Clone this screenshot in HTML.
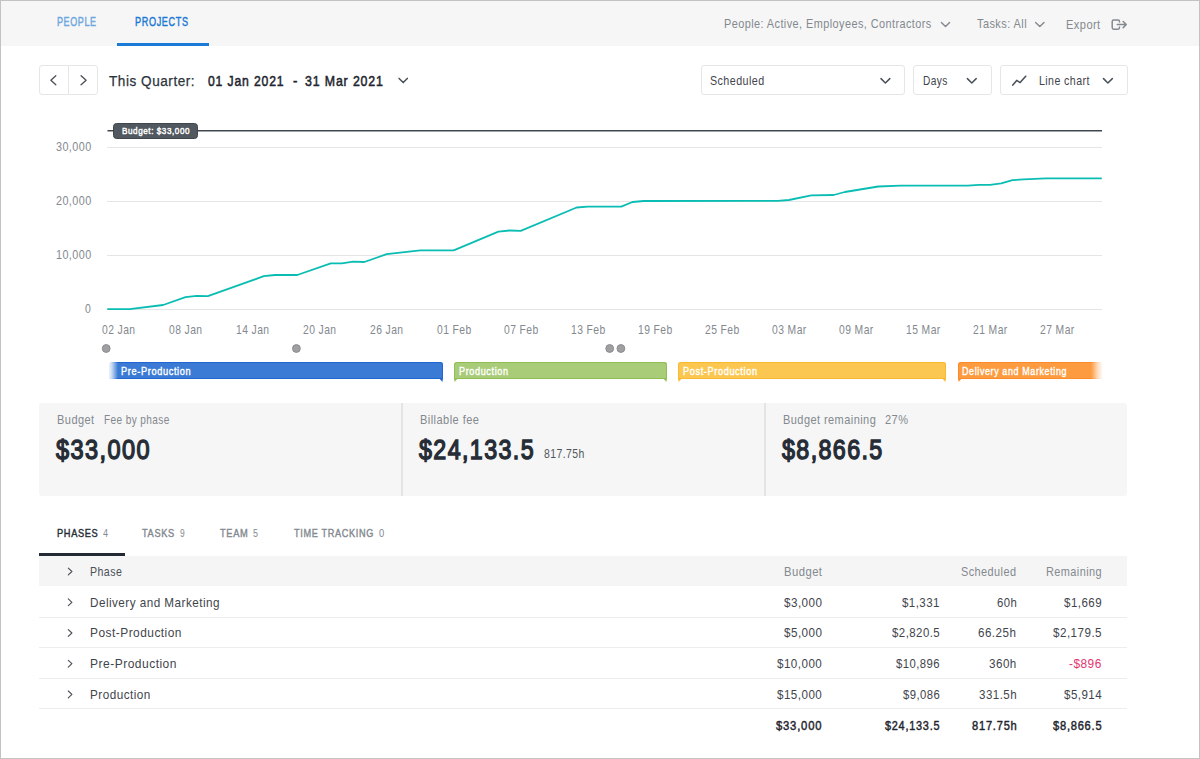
<!DOCTYPE html>
<html><head><meta charset="utf-8"><style>
html,body{margin:0;padding:0;}
body{width:1200px;height:759px;position:relative;overflow:hidden;background:#fff;font-family:"Liberation Sans",sans-serif;}
.t{position:absolute;white-space:nowrap;transform-origin:0 0;}
.r{position:absolute;}
.frame{position:absolute;left:0;top:0;width:1200px;height:759px;box-sizing:border-box;border:1px solid #c3c3c3;pointer-events:none;}
</style></head><body>
<div class="r" style="left:0px;top:0px;width:1200px;height:46px;background:#f6f6f6;"></div>
<div class="r" style="left:117px;top:43px;width:92px;height:3px;background:#1a7bd6;"></div>
<div class="t" style="left:56.70px;top:15.83px;font-size:12px;line-height:12px;font-weight:normal;color:#6ea7df;letter-spacing:0.8400000000000001px;transform:scaleX(0.7487);-webkit-text-stroke:0.43px #6ea7df;">PEOPLE</div>
<div class="t" style="left:134.70px;top:15.83px;font-size:12px;line-height:12px;font-weight:normal;color:#1c79d4;letter-spacing:0.8400000000000001px;transform:scaleX(0.7598);-webkit-text-stroke:0.43px #1c79d4;">PROJECTS</div>
<div class="t" style="left:724.40px;top:16.69px;font-size:13.5px;line-height:13.5px;font-weight:normal;color:#83898f;letter-spacing:0.54px;transform:scaleX(0.8063);">People: Active, Employees, Contractors</div>
<div class="t" style="left:976.70px;top:16.89px;font-size:13.5px;line-height:13.5px;font-weight:normal;color:#83898f;letter-spacing:0.54px;transform:scaleX(0.8114);">Tasks: All</div>
<div class="t" style="left:1065.50px;top:17.99px;font-size:13.5px;line-height:13.5px;font-weight:normal;color:#83898f;letter-spacing:0.54px;transform:scaleX(0.8198);">Export</div>
<div class="r" style="left:39px;top:65px;width:59px;height:30px;border:1px solid #e5e6e8;border-radius:3px;box-sizing:border-box;background:#fff;"></div>
<div class="r" style="left:68px;top:65px;width:1px;height:30px;background:#e5e6e8;"></div>
<div class="t" style="left:109.30px;top:72.98px;font-size:15.2px;line-height:15.2px;font-weight:normal;color:#2c333b;letter-spacing:0.608px;transform:scaleX(0.8928);-webkit-text-stroke:0.25px #2c333b;">This Quarter:</div>
<div class="t" style="left:207.70px;top:72.98px;font-size:15.2px;line-height:15.2px;font-weight:normal;color:#1f262f;letter-spacing:1.064px;transform:scaleX(0.8016);-webkit-text-stroke:0.55px #1f262f;">01 Jan 2021</div>
<div class="t" style="left:293.30px;top:72.98px;font-size:15.2px;line-height:15.2px;font-weight:normal;color:#1f262f;letter-spacing:1.064px;transform:scaleX(0.8693);-webkit-text-stroke:0.55px #1f262f;">-</div>
<div class="t" style="left:305.30px;top:72.98px;font-size:15.2px;line-height:15.2px;font-weight:normal;color:#1f262f;letter-spacing:1.064px;transform:scaleX(0.8126);-webkit-text-stroke:0.55px #1f262f;">31 Mar 2021</div>
<div class="r" style="left:701px;top:65px;width:204px;height:30px;border:1px solid #e5e6e8;border-radius:3px;box-sizing:border-box;"></div>
<div class="r" style="left:913px;top:65px;width:79px;height:30px;border:1px solid #e5e6e8;border-radius:3px;box-sizing:border-box;"></div>
<div class="r" style="left:1000px;top:65px;width:128px;height:30px;border:1px solid #e5e6e8;border-radius:3px;box-sizing:border-box;"></div>
<div class="t" style="left:710.20px;top:74.97px;font-size:12.8px;line-height:12.8px;font-weight:normal;color:#3f454c;letter-spacing:0.512px;transform:scaleX(0.8376);">Scheduled</div>
<div class="t" style="left:923.20px;top:74.97px;font-size:12.8px;line-height:12.8px;font-weight:normal;color:#3f454c;letter-spacing:0.512px;transform:scaleX(0.7917);">Days</div>
<div class="t" style="left:1038.60px;top:74.97px;font-size:12.8px;line-height:12.8px;font-weight:normal;color:#3f454c;letter-spacing:0.512px;transform:scaleX(0.8286);">Line chart</div>
<svg class="r" style="left:0;top:0" width="1200" height="759" viewBox="0 0 1200 759"><line x1="107" y1="147.5" x2="1102" y2="147.5" stroke="#e5e5e5" stroke-width="1"/><line x1="107" y1="201.5" x2="1102" y2="201.5" stroke="#e5e5e5" stroke-width="1"/><line x1="107" y1="255.5" x2="1102" y2="255.5" stroke="#e5e5e5" stroke-width="1"/><line x1="107" y1="309.5" x2="1102" y2="309.5" stroke="#e5e5e5" stroke-width="1"/><line x1="107.5" y1="130.7" x2="1102" y2="130.7" stroke="#40474e" stroke-width="1.6"/><polyline points="107.30,309.20 129.65,309.20 163.17,305.00 185.52,297.20 196.69,295.80 207.87,296.20 263.74,276.20 274.91,275.00 297.26,275.00 330.78,263.30 341.96,263.30 353.13,261.70 364.31,262.00 386.65,254.20 420.18,250.30 453.70,250.30 498.40,231.70 509.57,230.50 520.74,230.80 576.61,207.50 587.79,206.70 621.31,206.70 632.49,202.00 643.66,201.00 777.75,200.80 788.92,200.00 811.27,195.30 833.62,195.00 844.79,192.00 878.32,186.50 900.67,185.60 967.71,185.60 978.88,184.80 990.06,184.80 1001.23,183.30 1012.41,180.20 1023.58,179.40 1045.93,178.30 1101.80,178.30" fill="none" stroke="#0abdb3" stroke-width="1.8" stroke-linejoin="round"/><circle cx="106.20" cy="348.5" r="3.9" fill="#a0a0a0" stroke="#878c93" stroke-width="1"/><circle cx="296.40" cy="348.5" r="3.9" fill="#a0a0a0" stroke="#878c93" stroke-width="1"/><circle cx="609.70" cy="348.5" r="3.9" fill="#a0a0a0" stroke="#878c93" stroke-width="1"/><circle cx="620.90" cy="348.5" r="3.9" fill="#a0a0a0" stroke="#878c93" stroke-width="1"/></svg>
<div class="r" style="left:113px;top:123px;width:85px;height:15.5px;background:#51585f;border:1px solid #40464d;box-sizing:border-box;border-radius:3.5px;"></div>
<div class="t" style="left:121.90px;top:125.68px;font-size:9.9px;line-height:9.9px;font-weight:normal;color:#ffffff;letter-spacing:0.6930000000000001px;transform:scaleX(0.8219);-webkit-text-stroke:0.36px #ffffff;-webkit-text-stroke:0.45px #fff;">Budget: $33,000</div>
<div class="t" style="left:55.80px;top:140.67px;font-size:12.8px;line-height:12.8px;font-weight:normal;color:#83898f;letter-spacing:0.512px;transform:scaleX(0.8438);">30,000</div>
<div class="t" style="left:55.80px;top:194.67px;font-size:12.8px;line-height:12.8px;font-weight:normal;color:#83898f;letter-spacing:0.512px;transform:scaleX(0.8438);">20,000</div>
<div class="t" style="left:55.80px;top:248.67px;font-size:12.8px;line-height:12.8px;font-weight:normal;color:#83898f;letter-spacing:0.512px;transform:scaleX(0.8438);">10,000</div>
<div class="t" style="left:85.20px;top:302.67px;font-size:12.8px;line-height:12.8px;font-weight:normal;color:#83898f;letter-spacing:0.512px;transform:scaleX(0.8150);">0</div>
<div class="t" style="left:101.95px;top:324.17px;font-size:12.8px;line-height:12.8px;font-weight:normal;color:#83898f;letter-spacing:0.512px;transform:scaleX(0.8063);">02 Jan</div>
<div class="t" style="left:169.00px;top:324.17px;font-size:12.8px;line-height:12.8px;font-weight:normal;color:#83898f;letter-spacing:0.512px;transform:scaleX(0.8063);">08 Jan</div>
<div class="t" style="left:236.04px;top:324.17px;font-size:12.8px;line-height:12.8px;font-weight:normal;color:#83898f;letter-spacing:0.512px;transform:scaleX(0.8063);">14 Jan</div>
<div class="t" style="left:303.09px;top:324.17px;font-size:12.8px;line-height:12.8px;font-weight:normal;color:#83898f;letter-spacing:0.512px;transform:scaleX(0.8063);">20 Jan</div>
<div class="t" style="left:370.13px;top:324.17px;font-size:12.8px;line-height:12.8px;font-weight:normal;color:#83898f;letter-spacing:0.512px;transform:scaleX(0.8063);">26 Jan</div>
<div class="t" style="left:436.56px;top:324.17px;font-size:12.8px;line-height:12.8px;font-weight:normal;color:#83898f;letter-spacing:0.512px;transform:scaleX(0.8081);">01 Feb</div>
<div class="t" style="left:503.61px;top:324.17px;font-size:12.8px;line-height:12.8px;font-weight:normal;color:#83898f;letter-spacing:0.512px;transform:scaleX(0.8081);">07 Feb</div>
<div class="t" style="left:570.65px;top:324.17px;font-size:12.8px;line-height:12.8px;font-weight:normal;color:#83898f;letter-spacing:0.512px;transform:scaleX(0.8081);">13 Feb</div>
<div class="t" style="left:637.70px;top:324.17px;font-size:12.8px;line-height:12.8px;font-weight:normal;color:#83898f;letter-spacing:0.512px;transform:scaleX(0.8081);">19 Feb</div>
<div class="t" style="left:704.74px;top:324.17px;font-size:12.8px;line-height:12.8px;font-weight:normal;color:#83898f;letter-spacing:0.512px;transform:scaleX(0.8081);">25 Feb</div>
<div class="t" style="left:771.80px;top:324.17px;font-size:12.8px;line-height:12.8px;font-weight:normal;color:#83898f;letter-spacing:0.512px;transform:scaleX(0.8081);">03 Mar</div>
<div class="t" style="left:838.84px;top:324.17px;font-size:12.8px;line-height:12.8px;font-weight:normal;color:#83898f;letter-spacing:0.512px;transform:scaleX(0.8081);">09 Mar</div>
<div class="t" style="left:905.89px;top:324.17px;font-size:12.8px;line-height:12.8px;font-weight:normal;color:#83898f;letter-spacing:0.512px;transform:scaleX(0.8081);">15 Mar</div>
<div class="t" style="left:972.93px;top:324.17px;font-size:12.8px;line-height:12.8px;font-weight:normal;color:#83898f;letter-spacing:0.512px;transform:scaleX(0.8081);">21 Mar</div>
<div class="t" style="left:1039.97px;top:324.17px;font-size:12.8px;line-height:12.8px;font-weight:normal;color:#83898f;letter-spacing:0.512px;transform:scaleX(0.8081);">27 Mar</div>
<div class="r" style="left:0px;top:0px;width:0px;height:0px;"></div>
<div class="r" style="left:109px;top:362px;width:334px;height:17px;background:#3b7bd5;border:1px solid #1f66d1;border-bottom:none;border-radius:2.5px 2.5px 0 0;box-sizing:border-box;"></div>
<svg class="r" style="left:109px;top:378px" width="334" height="5" viewBox="0 0 334 5"><path d="M334 0 H330 L333.4 4 Z" fill="#1f66d1"/><rect x="0" y="0" width="334" height="1" fill="#1f66d1"/></svg>
<div class="r" style="left:454px;top:362px;width:213px;height:17px;background:#a9cc78;border:1px solid #8fbe55;border-bottom:none;border-radius:2.5px 2.5px 0 0;box-sizing:border-box;"></div>
<svg class="r" style="left:454px;top:378px" width="213" height="5" viewBox="0 0 213 5"><path d="M0 0 H4 L0.6 4 Z" fill="#8fbe55"/><path d="M213 0 H209 L212.4 4 Z" fill="#8fbe55"/><rect x="0" y="0" width="213" height="1" fill="#8fbe55"/></svg>
<div class="r" style="left:678px;top:362px;width:268px;height:17px;background:#fcc750;border:1px solid #f7ba2f;border-bottom:none;border-radius:2.5px 2.5px 0 0;box-sizing:border-box;"></div>
<svg class="r" style="left:678px;top:378px" width="268" height="5" viewBox="0 0 268 5"><path d="M0 0 H4 L0.6 4 Z" fill="#f7ba2f"/><path d="M268 0 H264 L267.4 4 Z" fill="#f7ba2f"/><rect x="0" y="0" width="268" height="1" fill="#f7ba2f"/></svg>
<div class="r" style="left:958px;top:362px;width:144px;height:17px;background:#fd9b40;border:1px solid #fa8b28;border-bottom:none;border-radius:2.5px 2.5px 0 0;box-sizing:border-box;"></div>
<svg class="r" style="left:958px;top:378px" width="144" height="5" viewBox="0 0 144 5"><path d="M0 0 H4 L0.6 4 Z" fill="#fa8b28"/><rect x="0" y="0" width="144" height="1" fill="#fa8b28"/></svg>
<div class="r" style="left:108px;top:361px;width:10px;height:22px;background:linear-gradient(90deg,#fff 0%,rgba(255,255,255,0.7) 40%,rgba(255,255,255,0) 100%);"></div>
<div class="r" style="left:1091px;top:361px;width:12px;height:22px;background:linear-gradient(90deg,rgba(255,255,255,0) 0%,rgba(255,255,255,0.7) 60%,#fff 100%);"></div>
<div class="t" style="left:120.70px;top:365.60px;font-size:10.6px;line-height:10.6px;font-weight:normal;color:#fff;letter-spacing:0.742px;transform:scaleX(0.8675);-webkit-text-stroke:0.38px #fff;">Pre-Production</div>
<div class="t" style="left:459.00px;top:365.60px;font-size:10.6px;line-height:10.6px;font-weight:normal;color:#fff;letter-spacing:0.742px;transform:scaleX(0.8543);-webkit-text-stroke:0.38px #fff;">Production</div>
<div class="t" style="left:682.50px;top:365.60px;font-size:10.6px;line-height:10.6px;font-weight:normal;color:#fff;letter-spacing:0.742px;transform:scaleX(0.8624);-webkit-text-stroke:0.38px #fff;">Post-Production</div>
<div class="t" style="left:962.00px;top:365.60px;font-size:10.6px;line-height:10.6px;font-weight:normal;color:#fff;letter-spacing:0.742px;transform:scaleX(0.8428);-webkit-text-stroke:0.38px #fff;">Delivery and Marketing</div>
<div class="r" style="left:39px;top:403px;width:1088px;height:93px;background:#f6f6f6;border-radius:3px;"></div>
<div class="r" style="left:401px;top:403px;width:2px;height:93px;background:#e3e4e6;"></div>
<div class="r" style="left:764px;top:403px;width:2px;height:93px;background:#e3e4e6;"></div>
<div class="t" style="left:56.80px;top:413.54px;font-size:12.6px;line-height:12.6px;font-weight:normal;color:#83898f;letter-spacing:0.504px;transform:scaleX(0.8763);">Budget</div>
<div class="t" style="left:103.60px;top:413.54px;font-size:12.6px;line-height:12.6px;font-weight:normal;color:#83898f;letter-spacing:0.504px;transform:scaleX(0.7985);">Fee by phase</div>
<div class="t" style="left:56.00px;top:435.13px;font-size:28.5px;line-height:28.5px;font-weight:normal;color:#262d36;letter-spacing:1.71px;transform:scaleX(0.8262);-webkit-text-stroke:1.43px #262d36;">$33,000</div>
<div class="t" style="left:419.70px;top:413.54px;font-size:12.6px;line-height:12.6px;font-weight:normal;color:#83898f;letter-spacing:0.504px;transform:scaleX(0.8767);">Billable fee</div>
<div class="t" style="left:419.40px;top:435.13px;font-size:28.5px;line-height:28.5px;font-weight:normal;color:#262d36;letter-spacing:1.71px;transform:scaleX(0.8158);-webkit-text-stroke:1.43px #262d36;">$24,133.5</div>
<div class="t" style="left:543.80px;top:448.19px;font-size:12.9px;line-height:12.9px;font-weight:normal;color:#50565d;letter-spacing:0.516px;transform:scaleX(0.8104);">817.75h</div>
<div class="t" style="left:782.90px;top:413.54px;font-size:12.6px;line-height:12.6px;font-weight:normal;color:#83898f;letter-spacing:0.504px;transform:scaleX(0.8728);">Budget remaining</div>
<div class="t" style="left:884.70px;top:413.54px;font-size:12.6px;line-height:12.6px;font-weight:normal;color:#83898f;letter-spacing:0.504px;transform:scaleX(0.8772);">27%</div>
<div class="t" style="left:782.40px;top:435.13px;font-size:28.5px;line-height:28.5px;font-weight:normal;color:#262d36;letter-spacing:1.71px;transform:scaleX(0.8160);-webkit-text-stroke:1.43px #262d36;">$8,866.5</div>
<div class="r" style="left:39px;top:553px;width:86px;height:3px;background:#232a33;"></div>
<div class="t" style="left:56.70px;top:528.12px;font-size:11.3px;line-height:11.3px;font-weight:normal;color:#262d36;letter-spacing:0.7910000000000001px;transform:scaleX(0.8193);-webkit-text-stroke:0.41px #262d36;">PHASES</div>
<div class="t" style="left:102.50px;top:528.12px;font-size:11.3px;line-height:11.3px;font-weight:normal;color:#83898f;letter-spacing:0.452px;transform:scaleX(0.7958);">4</div>
<div class="t" style="left:142.40px;top:528.12px;font-size:11.3px;line-height:11.3px;font-weight:normal;color:#83898f;letter-spacing:0.7910000000000001px;transform:scaleX(0.8177);-webkit-text-stroke:0.41px #83898f;">TASKS</div>
<div class="t" style="left:180.00px;top:528.12px;font-size:11.3px;line-height:11.3px;font-weight:normal;color:#83898f;letter-spacing:0.452px;transform:scaleX(0.7481);">9</div>
<div class="t" style="left:220.00px;top:528.12px;font-size:11.3px;line-height:11.3px;font-weight:normal;color:#83898f;letter-spacing:0.7910000000000001px;transform:scaleX(0.8204);-webkit-text-stroke:0.41px #83898f;">TEAM</div>
<div class="t" style="left:253.30px;top:528.12px;font-size:11.3px;line-height:11.3px;font-weight:normal;color:#83898f;letter-spacing:0.452px;transform:scaleX(0.7958);">5</div>
<div class="t" style="left:293.60px;top:528.12px;font-size:11.3px;line-height:11.3px;font-weight:normal;color:#83898f;letter-spacing:0.7910000000000001px;transform:scaleX(0.8118);-webkit-text-stroke:0.41px #83898f;">TIME TRACKING</div>
<div class="t" style="left:378.60px;top:528.12px;font-size:11.3px;line-height:11.3px;font-weight:normal;color:#83898f;letter-spacing:0.452px;transform:scaleX(0.8277);">0</div>
<div class="r" style="left:39px;top:556px;width:1088px;height:30px;background:#f5f5f5;"></div>
<div class="r" style="left:39px;top:617px;width:1088px;height:1px;background:#ededed;"></div>
<div class="r" style="left:39px;top:647px;width:1088px;height:1px;background:#ededed;"></div>
<div class="r" style="left:39px;top:678px;width:1088px;height:1px;background:#ededed;"></div>
<div class="r" style="left:39px;top:708px;width:1088px;height:1px;background:#ededed;"></div>
<svg class="r" style="left:0;top:0" width="1200" height="759" viewBox="0 0 1200 759"><g fill="none" stroke="#4b5159" stroke-width="1.15" stroke-linecap="round" stroke-linejoin="round"><path d="M68.3 568.1 L71.9 571.5 L68.3 574.9"/><path d="M68.3 598.9 L71.9 602.3 L68.3 605.7"/><path d="M68.3 629.6 L71.9 633.0 L68.3 636.4"/><path d="M68.3 660.3 L71.9 663.7 L68.3 667.1"/><path d="M68.3 691.0 L71.9 694.4 L68.3 697.8"/></g></svg>
<div class="t" style="left:89.50px;top:565.87px;font-size:12.8px;line-height:12.8px;font-weight:normal;color:#4a5057;letter-spacing:0.512px;transform:scaleX(0.8295);">Phase</div>
<div class="t" style="left:783.60px;top:565.87px;font-size:12.8px;line-height:12.8px;font-weight:normal;color:#83898f;letter-spacing:0.512px;transform:scaleX(0.8812);">Budget</div>
<div class="t" style="left:961.30px;top:565.87px;font-size:12.8px;line-height:12.8px;font-weight:normal;color:#83898f;letter-spacing:0.512px;transform:scaleX(0.8515);">Scheduled</div>
<div class="t" style="left:1046.00px;top:565.87px;font-size:12.8px;line-height:12.8px;font-weight:normal;color:#83898f;letter-spacing:0.512px;transform:scaleX(0.8532);">Remaining</div>
<div class="t" style="left:89.70px;top:596.67px;font-size:12.8px;line-height:12.8px;font-weight:normal;color:#3f454c;letter-spacing:0.512px;transform:scaleX(0.9142);">Delivery and Marketing</div>
<div class="t" style="left:783.60px;top:596.67px;font-size:12.8px;line-height:12.8px;font-weight:normal;color:#3f454c;letter-spacing:0.512px;transform:scaleX(0.9109);">$3,000</div>
<div class="t" style="left:901.80px;top:596.67px;font-size:12.8px;line-height:12.8px;font-weight:normal;color:#3f454c;letter-spacing:0.512px;transform:scaleX(0.8990);">$1,331</div>
<div class="t" style="left:996.50px;top:596.67px;font-size:12.8px;line-height:12.8px;font-weight:normal;color:#3f454c;letter-spacing:0.512px;transform:scaleX(0.8849);">60h</div>
<div class="t" style="left:1063.80px;top:596.67px;font-size:12.8px;line-height:12.8px;font-weight:normal;color:#3f454c;letter-spacing:0.512px;transform:scaleX(0.9037);">$1,669</div>
<div class="t" style="left:89.70px;top:627.37px;font-size:12.8px;line-height:12.8px;font-weight:normal;color:#3f454c;letter-spacing:0.512px;transform:scaleX(0.9314);">Post-Production</div>
<div class="t" style="left:783.60px;top:627.37px;font-size:12.8px;line-height:12.8px;font-weight:normal;color:#3f454c;letter-spacing:0.512px;transform:scaleX(0.9109);">$5,000</div>
<div class="t" style="left:891.60px;top:627.37px;font-size:12.8px;line-height:12.8px;font-weight:normal;color:#3f454c;letter-spacing:0.512px;transform:scaleX(0.8930);">$2,820.5</div>
<div class="t" style="left:978.40px;top:627.37px;font-size:12.8px;line-height:12.8px;font-weight:normal;color:#3f454c;letter-spacing:0.512px;transform:scaleX(0.9085);">66.25h</div>
<div class="t" style="left:1052.90px;top:627.37px;font-size:12.8px;line-height:12.8px;font-weight:normal;color:#3f454c;letter-spacing:0.512px;transform:scaleX(0.9099);">$2,179.5</div>
<div class="t" style="left:89.70px;top:658.07px;font-size:12.8px;line-height:12.8px;font-weight:normal;color:#3f454c;letter-spacing:0.512px;transform:scaleX(0.9399);">Pre-Production</div>
<div class="t" style="left:776.80px;top:658.07px;font-size:12.8px;line-height:12.8px;font-weight:normal;color:#3f454c;letter-spacing:0.512px;transform:scaleX(0.9079);">$10,000</div>
<div class="t" style="left:895.70px;top:658.07px;font-size:12.8px;line-height:12.8px;font-weight:normal;color:#3f454c;letter-spacing:0.512px;transform:scaleX(0.8836);">$10,896</div>
<div class="t" style="left:989.00px;top:658.07px;font-size:12.8px;line-height:12.8px;font-weight:normal;color:#3f454c;letter-spacing:0.512px;transform:scaleX(0.9095);">360h</div>
<div class="t" style="left:1069.20px;top:658.07px;font-size:12.8px;line-height:12.8px;font-weight:normal;color:#e5356f;letter-spacing:0.512px;transform:scaleX(0.9284);">-$896</div>
<div class="t" style="left:89.70px;top:688.77px;font-size:12.8px;line-height:12.8px;font-weight:normal;color:#3f454c;letter-spacing:0.512px;transform:scaleX(0.9163);">Production</div>
<div class="t" style="left:776.80px;top:688.77px;font-size:12.8px;line-height:12.8px;font-weight:normal;color:#3f454c;letter-spacing:0.512px;transform:scaleX(0.9079);">$15,000</div>
<div class="t" style="left:902.50px;top:688.77px;font-size:12.8px;line-height:12.8px;font-weight:normal;color:#3f454c;letter-spacing:0.512px;transform:scaleX(0.8822);">$9,086</div>
<div class="t" style="left:978.70px;top:688.77px;font-size:12.8px;line-height:12.8px;font-weight:normal;color:#3f454c;letter-spacing:0.512px;transform:scaleX(0.9014);">331.5h</div>
<div class="t" style="left:1063.80px;top:688.77px;font-size:12.8px;line-height:12.8px;font-weight:normal;color:#3f454c;letter-spacing:0.512px;transform:scaleX(0.9037);">$5,914</div>
<div class="t" style="left:776.10px;top:719.77px;font-size:12.8px;line-height:12.8px;font-weight:normal;color:#1f262f;letter-spacing:0.8960000000000001px;transform:scaleX(0.8810);-webkit-text-stroke:0.46px #1f262f;">$33,000</div>
<div class="t" style="left:884.80px;top:719.77px;font-size:12.8px;line-height:12.8px;font-weight:normal;color:#1f262f;letter-spacing:0.8960000000000001px;transform:scaleX(0.8500);-webkit-text-stroke:0.46px #1f262f;">$24,133.5</div>
<div class="t" style="left:971.50px;top:719.77px;font-size:12.8px;line-height:12.8px;font-weight:normal;color:#1f262f;letter-spacing:0.8960000000000001px;transform:scaleX(0.8674);-webkit-text-stroke:0.46px #1f262f;">817.75h</div>
<div class="t" style="left:1052.90px;top:719.77px;font-size:12.8px;line-height:12.8px;font-weight:normal;color:#1f262f;letter-spacing:0.8960000000000001px;transform:scaleX(0.8663);-webkit-text-stroke:0.46px #1f262f;">$8,866.5</div>
<svg class="r" style="left:0;top:0" width="1200" height="759" viewBox="0 0 1200 759"><g fill="none" stroke-linecap="round" stroke-linejoin="round"><path d="M941.4 22.4 L945.5 26.5 L949.6 22.4" stroke="#83898f" stroke-width="1.4"/><path d="M1035.6 22.4 L1039.8 26.5 L1044 22.4" stroke="#83898f" stroke-width="1.4"/><path d="M1119.5 22 V21.5 Q1119.5 19.9 1117.9 19.9 H1113.8 Q1112.2 19.9 1112.2 21.5 V27.6 Q1112.2 29.2 1113.8 29.2 H1117.9 Q1119.5 29.2 1119.5 27.6 V27" stroke="#83898f" stroke-width="1.5"/><path d="M1117.3 24.5 H1126.2 M1123.2 21.5 L1126.3 24.5 L1123.2 27.6" stroke="#83898f" stroke-width="1.5"/><path d="M55.8 75.8 L50.9 80.2 L55.8 84.7" stroke="#4b5159" stroke-width="1.35"/><path d="M81.1 75.8 L86.1 80.2 L81.1 84.7" stroke="#4b5159" stroke-width="1.35"/><path d="M399.1 78.4 L403.2 82.6 L407.3 78.4" stroke="#4b5159" stroke-width="1.5"/><path d="M881 78.6 L885.4 83 L889.8 78.6" stroke="#4b5159" stroke-width="1.5"/><path d="M967.4 78.6 L971.8 83 L976.2 78.6" stroke="#4b5159" stroke-width="1.5"/><path d="M1103.5 78.6 L1107.9 83 L1112.3 78.6" stroke="#4b5159" stroke-width="1.5"/><path d="M1012.8 85.1 L1016.7 80.4 L1020.1 82.6 L1025.7 76.2" stroke="#4b5159" stroke-width="1.55"/></g></svg>
<div class="frame"></div>
</body></html>
